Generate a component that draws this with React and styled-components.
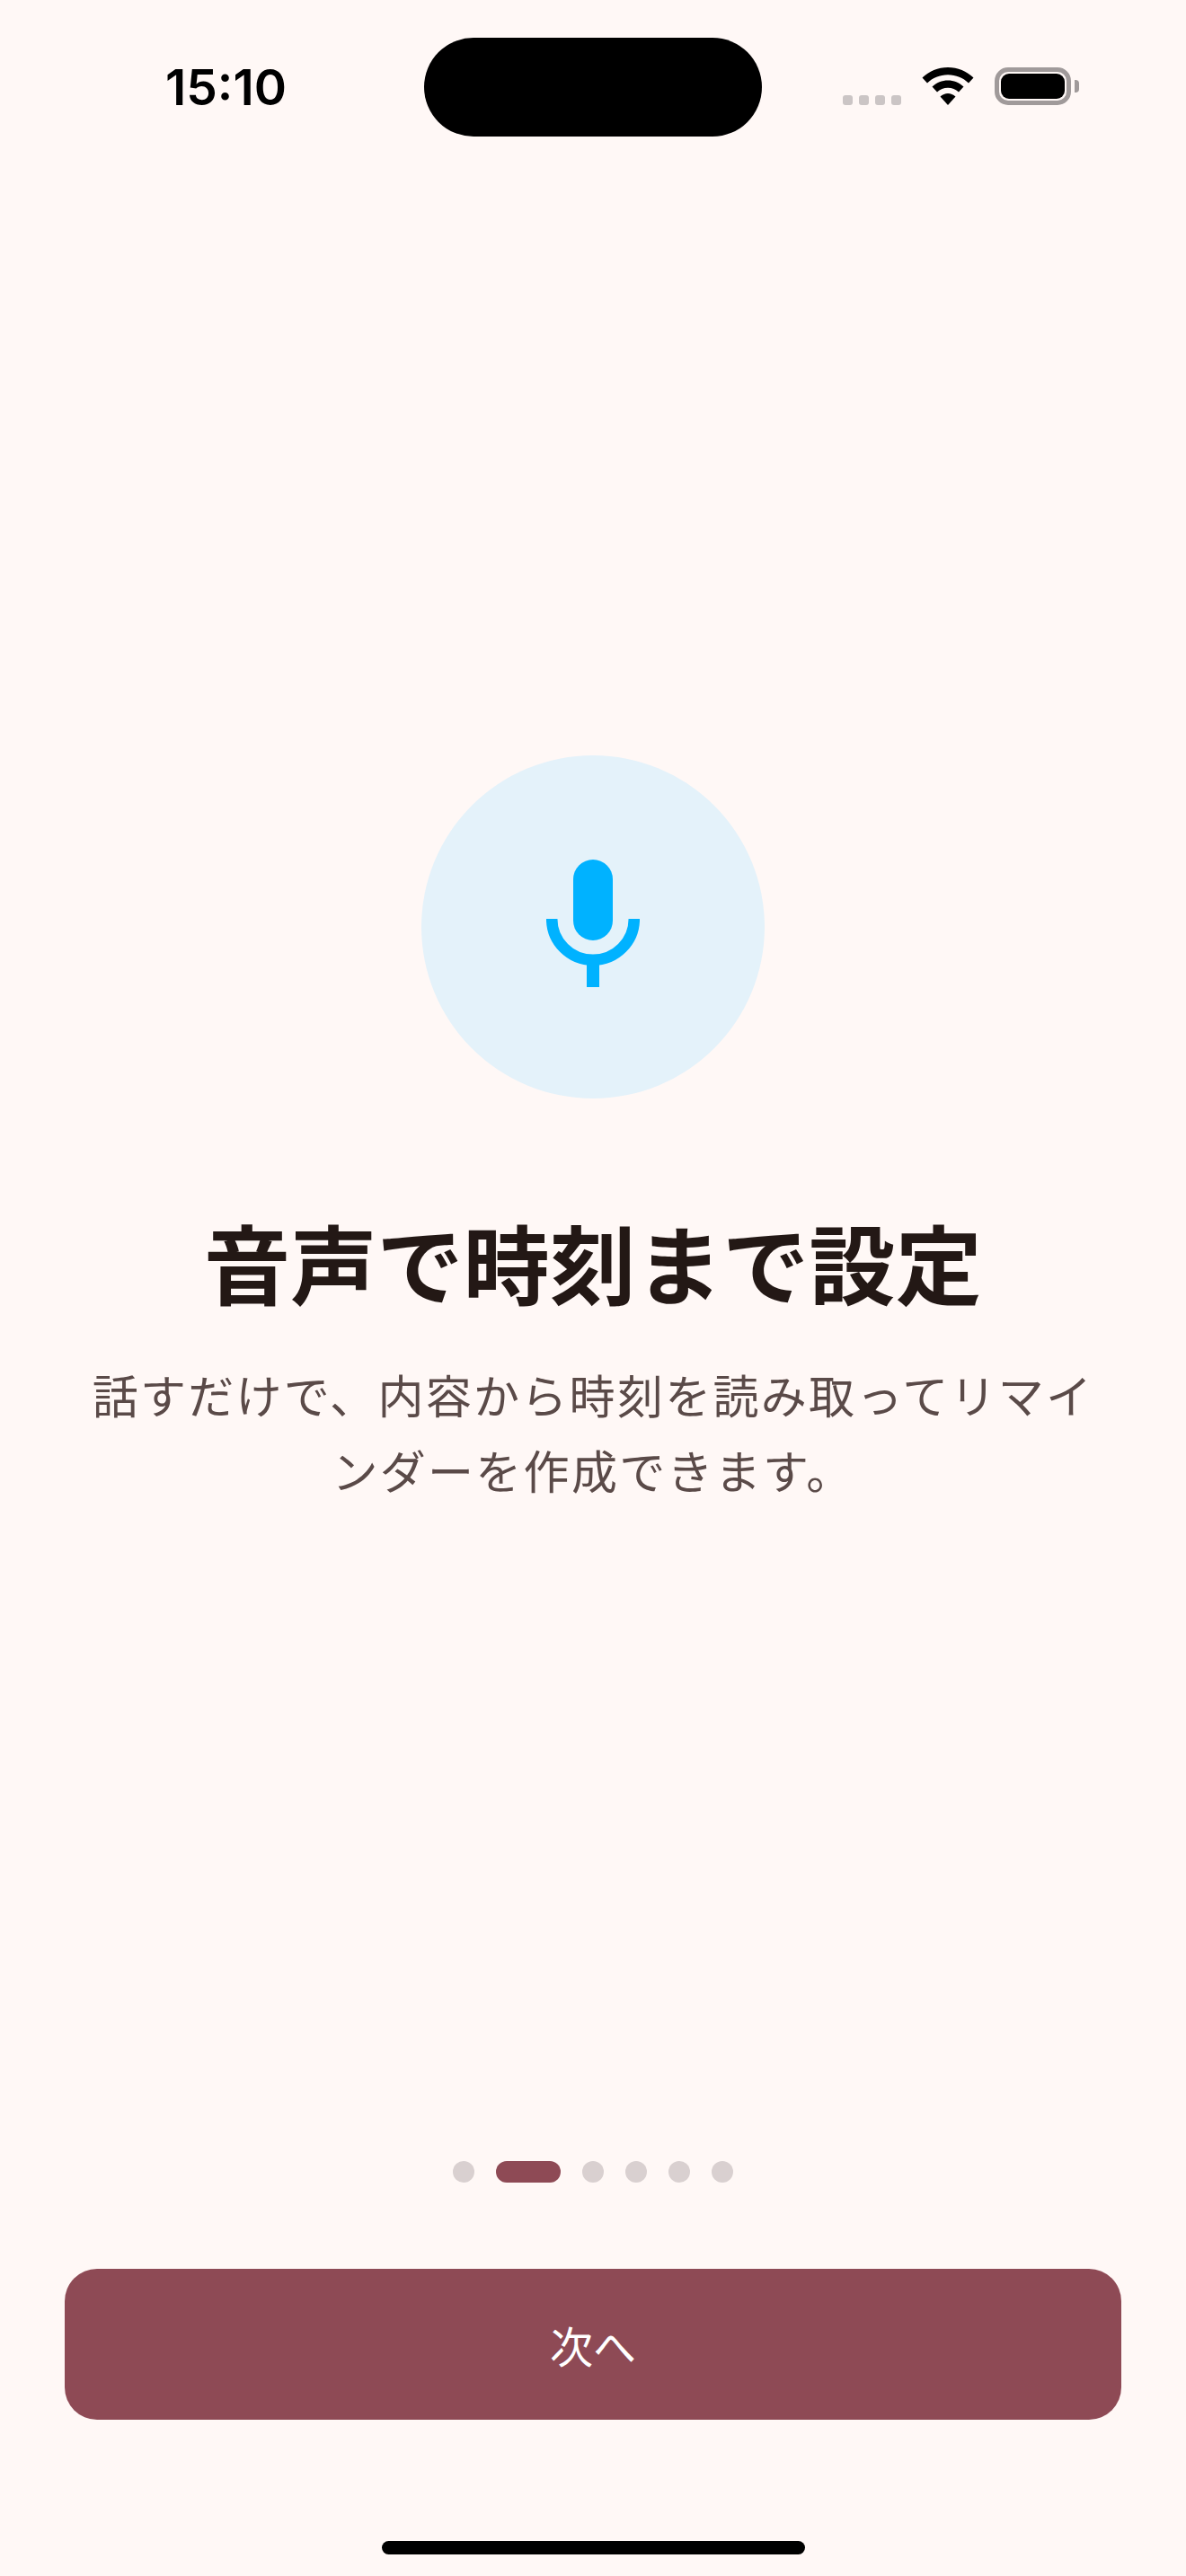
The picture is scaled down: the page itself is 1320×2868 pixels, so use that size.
import React from 'react'
import styled, { createGlobalStyle } from 'styled-components'

const Global = createGlobalStyle`
html, body {
  margin: 0;
  padding: 0;
  background: #FFF8F6;
}
`

const Screen = styled.div`
width: 1320px;
height: 2868px;
display: flex;
flex-direction: column;
align-items: center;
overflow: hidden;
background: #FFF8F6;
font-family: "Noto Sans CJK JP", "Noto Sans", sans-serif;
`

const StatusBar = styled.div`
width: 100%;
height: 152px;
flex-shrink: 0;
box-sizing: border-box;
display: grid;
grid-template-columns: 1fr 376px 1fr;
padding-top: 42px;
`

const Time = styled.div`
font-family: Inter, "Liberation Sans", sans-serif;
font-size: 55px;
font-weight: 600;
line-height: 54px;
color: #000;
padding: 28px 0 0 184px;
`

const Island = styled.div`
height: 110px;
border-radius: 55px;
background: #000;
`

const StatusIcons = styled.div`
display: flex;
align-items: flex-end;
height: 75px;
padding-left: 90px;
`

const SignalDots = styled.div`
display: flex;
gap: 7px;
margin-right: 23px;
`

const SignalDot = styled.span`
width: 11px;
height: 11px;
border-radius: 3px;
background: #CBC5C5;
`

const Battery = styled.div`
position: relative;
width: 85px;
height: 42px;
margin-left: 23px;
box-sizing: border-box;
border: 5px solid #A09A9A;
border-radius: 15px;
padding: 2px;
display: flex;

&::after {
  content: '';
  position: absolute;
  right: -14px;
  top: 9px;
  width: 5px;
  height: 14px;
  border-radius: 0 4px 4px 0;
  background: #A09A9A;
}
`

const BatteryFill = styled.span`
flex: 1;
border-radius: 9px;
background: #000;
`

const Hero = styled.main`
display: flex;
flex-direction: column;
align-items: center;
padding-top: 689px;
`

const IconCircle = styled.div`
width: 382px;
height: 382px;
box-sizing: border-box;
padding-bottom: 8px;
border-radius: 50%;
background: #E4F2FA;
display: flex;
justify-content: center;
align-items: center;
`

const Title = styled.h1`
margin: 111px 0 0;
font-size: 96px;
font-weight: 700;
line-height: 140px;
letter-spacing: 0.2px;
color: #231815;
`

const Description = styled.p`
margin: 36px 0 0;
width: 1130px;
font-size: 51px;
font-weight: 400;
line-height: 84px;
letter-spacing: 2.3px;
text-align: center;
color: #5A4A48;
`

const Footer = styled.footer`
margin-top: auto;
width: 100%;
display: flex;
flex-direction: column;
align-items: center;
`

const Pager = styled.div`
display: flex;
gap: 24px;
`

const PagerDot = styled.span`
width: ${props => (props.$active ? '72px' : '24px')};
height: 24px;
border-radius: 12px;
background: ${props => (props.$active ? '#8E4A55' : '#D9D0D0')};
`

const NextButton = styled.button`
margin-top: 96px;
width: 1176px;
height: 168px;
border: none;
border-radius: 36px;
background: #8E4A55;
color: #fff;
font-family: inherit;
font-size: 48px;
font-weight: 400;
`

const HomeBar = styled.div`
margin: 135px 0 24px;
width: 471px;
height: 15px;
border-radius: 8px;
background: #000;
`

const WifiIcon = () => (
  <svg width="58" height="42" viewBox="0 0 58 42">
    <path fill="#000" d="M29 0C18 0 8 4.300 0.500 11.500L6 17.500C12 11.800 20 8.300 29 8.300S46 11.800 52 17.500L57.500 11.500C50 4.300 40 0 29 0Z" />
    <path fill="#000" d="M29 14.500C22.500 14.500 16.300 17 11.500 21.500L17 27.500C20.200 24.500 24.400 22.800 29 22.800S37.800 24.500 41 27.500L46.500 21.500C41.700 17 35.500 14.500 29 14.500Z" />
    <path fill="#000" d="M29 29C26 29 23 30.200 20.500 32.500L29 42L37.500 32.500C35 30.200 32 29 29 29Z" />
  </svg>
)

const MicIcon = () => (
  <svg width="104" height="142" viewBox="0 0 104 142">
    <rect x="30" y="0" width="44" height="90" rx="22" fill="#00B2FF" />
    <path d="M6.200 67V66A45.800 45.800 0 0 0 97.800 66V67" fill="none" stroke="#00B2FF" strokeWidth="12.500" />
    <rect x="45" y="110" width="14" height="32" fill="#00B2FF" />
  </svg>
)

const App = () => {
  return (
    <Screen>
      <Global />
      <StatusBar>
        <Time>15:10</Time>
        <Island />
        <StatusIcons>
          <SignalDots>
            <SignalDot />
            <SignalDot />
            <SignalDot />
            <SignalDot />
          </SignalDots>
          <WifiIcon />
          <Battery>
            <BatteryFill />
          </Battery>
        </StatusIcons>
      </StatusBar>
      <Hero>
        <IconCircle>
          <MicIcon />
        </IconCircle>
        <Title>音声で時刻まで設定</Title>
        <Description>話すだけで、内容から時刻を読み取ってリマインダーを作成できます。</Description>
      </Hero>
      <Footer>
        <Pager>
          {[0, 1, 2, 3, 4, 5].map(i => (
            <PagerDot key={i} $active={i === 1} />
          ))}
        </Pager>
        <NextButton>次へ</NextButton>
        <HomeBar />
      </Footer>
    </Screen>
  )
}

export default App
